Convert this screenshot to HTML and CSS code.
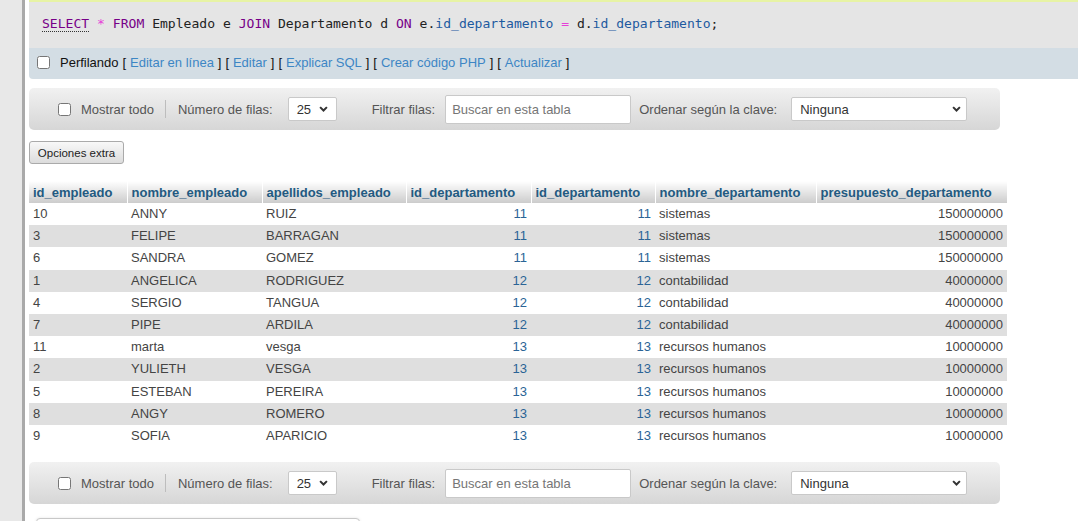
FILE: index.html
```html
<!DOCTYPE html>
<html lang="es">
<head>
<meta charset="utf-8">
<title>phpMyAdmin</title>
<link rel="stylesheet" href="styles.css">
</head>
<body>
<div class="app">
  <div class="nav-strip"></div>
  <div class="resizer"></div>
  <main class="content">
    <div class="msg-edge"></div>
    <div class="sql-box"><code><span class="kw kw-doc">SELECT</span> <span class="op">*</span> <span class="kw">FROM</span> Empleado e <span class="kw">JOIN</span> Departamento d <span class="kw">ON</span> e.<span class="var">id_departamento</span> <span class="op">=</span> d.<span class="var">id_departamento</span>;</code></div>
    <div class="tools">
      <input type="checkbox" class="cb">
      <span class="tools-text">Perfilando [ <a href="#">Editar en línea</a> ] [ <a href="#">Editar</a> ] [ <a href="#">Explicar SQL</a> ] [ <a href="#">Crear código PHP</a> ] [ <a href="#">Actualizar</a> ]</span>
    </div>

    <div class="navigation">
      <input type="checkbox" class="cb nav-cb">
      <span class="lbl lbl-show">Mostrar todo</span>
      <span class="sep"></span>
      <span class="lbl lbl-rows">Número de filas:</span>
      <span class="sel sel-rows"><span>25</span><svg class="chev" width="9" height="6" viewBox="0 0 9 6"><polyline points="1.1,1.1 4.5,4.5 7.9,1.1" fill="none" stroke="#333" stroke-width="2"/></svg></span>
      <span class="lbl lbl-filter">Filtrar filas:</span>
      <span class="search">Buscar en esta tabla</span>
      <span class="lbl lbl-sort">Ordenar según la clave:</span>
      <span class="sel sel-sort"><span>Ninguna</span><svg class="chev" width="9" height="6" viewBox="0 0 9 6"><polyline points="1.1,1.1 4.5,4.5 7.9,1.1" fill="none" stroke="#333" stroke-width="2"/></svg></span>
    </div>

    <div class="extra-row"><button class="extra">Opciones extra</button></div>

    <table class="data">
      <colgroup>
        <col class="c1"><col class="c2"><col class="c3"><col class="c4"><col class="c5"><col class="c6"><col class="c7">
      </colgroup>
      <thead>
        <tr>
          <th>id_empleado</th><th>nombre_empleado</th><th>apellidos_empleado</th><th>id_departamento</th><th>id_departamento</th><th>nombre_departamento</th><th>presupuesto_departamento</th>
        </tr>
      </thead>
      <tbody>
        <tr><td>10</td><td>ANNY</td><td>RUIZ</td><td class="num link">11</td><td class="num link">11</td><td>sistemas</td><td class="num">150000000</td></tr>
        <tr><td>3</td><td>FELIPE</td><td>BARRAGAN</td><td class="num link">11</td><td class="num link">11</td><td>sistemas</td><td class="num">150000000</td></tr>
        <tr><td>6</td><td>SANDRA</td><td>GOMEZ</td><td class="num link">11</td><td class="num link">11</td><td>sistemas</td><td class="num">150000000</td></tr>
        <tr><td>1</td><td>ANGELICA</td><td>RODRIGUEZ</td><td class="num link">12</td><td class="num link">12</td><td>contabilidad</td><td class="num">40000000</td></tr>
        <tr><td>4</td><td>SERGIO</td><td>TANGUA</td><td class="num link">12</td><td class="num link">12</td><td>contabilidad</td><td class="num">40000000</td></tr>
        <tr><td>7</td><td>PIPE</td><td>ARDILA</td><td class="num link">12</td><td class="num link">12</td><td>contabilidad</td><td class="num">40000000</td></tr>
        <tr><td>11</td><td>marta</td><td>vesga</td><td class="num link">13</td><td class="num link">13</td><td>recursos humanos</td><td class="num">10000000</td></tr>
        <tr><td>2</td><td>YULIETH</td><td>VESGA</td><td class="num link">13</td><td class="num link">13</td><td>recursos humanos</td><td class="num">10000000</td></tr>
        <tr><td>5</td><td>ESTEBAN</td><td>PEREIRA</td><td class="num link">13</td><td class="num link">13</td><td>recursos humanos</td><td class="num">10000000</td></tr>
        <tr><td>8</td><td>ANGY</td><td>ROMERO</td><td class="num link">13</td><td class="num link">13</td><td>recursos humanos</td><td class="num">10000000</td></tr>
        <tr><td>9</td><td>SOFIA</td><td>APARICIO</td><td class="num link">13</td><td class="num link">13</td><td>recursos humanos</td><td class="num">10000000</td></tr>
      </tbody>
    </table>

    <div class="navigation nav-bottom">
      <input type="checkbox" class="cb nav-cb">
      <span class="lbl lbl-show">Mostrar todo</span>
      <span class="sep"></span>
      <span class="lbl lbl-rows">Número de filas:</span>
      <span class="sel sel-rows"><span>25</span><svg class="chev" width="9" height="6" viewBox="0 0 9 6"><polyline points="1.1,1.1 4.5,4.5 7.9,1.1" fill="none" stroke="#333" stroke-width="2"/></svg></span>
      <span class="lbl lbl-filter">Filtrar filas:</span>
      <span class="search">Buscar en esta tabla</span>
      <span class="lbl lbl-sort">Ordenar según la clave:</span>
      <span class="sel sel-sort"><span>Ninguna</span><svg class="chev" width="9" height="6" viewBox="0 0 9 6"><polyline points="1.1,1.1 4.5,4.5 7.9,1.1" fill="none" stroke="#333" stroke-width="2"/></svg></span>
    </div>

    <div class="ops"></div>
  </main>
</div>
</body>
</html>
```

FILE: styles.css
```css
* { box-sizing: border-box; }

html, body {
  margin: 0;
  padding: 0;
  background: #fff;
}

body {
  font-family: "Liberation Sans", Arial, sans-serif;
  font-size: 13px;
  color: #444;
  overflow: hidden;
  height: 521px;
}

.app {
  display: flex;
  height: 521px;
  overflow: hidden;
}

.nav-strip {
  width: 22px;
  flex: none;
  background: #e8e8e8;
}

.resizer {
  width: 3px;
  flex: none;
  background: #a9a9a9;
}

.content {
  flex: 1;
  min-width: 0;
  padding-left: 4px;
}

.msg-edge {
  height: 2px;
  background: #e7f3a5;
}

.sql-box {
  height: 46px;
  background: #e5e5e5;
  display: flex;
  align-items: center;
  padding-left: 13px;
  padding-bottom: 4px;
}

.sql-box code {
  font-family: "DejaVu Sans Mono", "Liberation Mono", monospace;
  font-size: 13.07px;
  color: #222;
  white-space: pre;
}

.kw { color: #770088; }
.kw-doc { border-bottom: 1px dotted #333; }
.op { color: #e63fd8; }
.var { color: #1d5aa0; }

.tools {
  height: 31px;
  background: #d3dde4;
  display: flex;
  align-items: center;
  padding-left: 8px;
  padding-bottom: 2px;
  border-bottom-left-radius: 4px;
  color: #000;
}

.cb {
  width: 13px;
  height: 13px;
  margin: 0;
  flex: none;
}

.tools-text {
  margin-left: 10px;
  color: #111;
  word-spacing: 0.33px;
}

.tools-text a {
  color: #3d86c4;
  text-decoration: none;
  word-spacing: 0;
}

.navigation {
  margin-top: 9px;
  width: 971px;
  height: 42px;
  border-radius: 5px;
  background: linear-gradient(to bottom, #f1f1f1, #d6d6d6);
  display: flex;
  align-items: center;
  padding-left: 29px;
  color: #555;
}

.nav-bottom {
  margin-top: 15px;
}

.lbl { white-space: nowrap; }

.lbl-show { margin-left: 10px; }

.sep {
  width: 1px;
  height: 18px;
  background: #bdbdbd;
  margin-left: 11px;
}

.lbl-rows { margin-left: 12px; }

.sel {
  position: relative;
  height: 24px;
  background: #fff;
  border: 1px solid #c9c9c9;
  border-radius: 2px;
  display: flex;
  align-items: center;
  padding-left: 8px;
  color: #333;
}

.sel-rows {
  width: 49px;
  margin-left: 15px;
}

.sel-sort {
  width: 176px;
  margin-left: 14px;
}

.chev {
  position: absolute;
  right: 5px;
  top: 8px;
}

.sel-rows .chev { right: 8px; }

.lbl-filter { margin-left: 35px; }

.search {
  width: 186px;
  height: 29px;
  margin-left: 10px;
  background: #fff;
  border: 1px solid #c9c9c9;
  border-radius: 2px;
  display: flex;
  align-items: center;
  padding-left: 6px;
  color: #767676;
}

.lbl-sort { margin-left: 8px; }

.extra-row {
  margin-top: 11px;
  height: 23px;
}

.extra {
  height: 23px;
  width: 95px;
  padding: 0;
  font-family: "Liberation Sans", Arial, sans-serif;
  font-size: 11.5px;
  color: #222;
  background: linear-gradient(to bottom, #f8f8f8, #dcdcdc);
  border: 1px solid #aaa;
  border-radius: 3px;
}

.data {
  margin-top: 17px;
  border-collapse: collapse;
  table-layout: fixed;
  width: 978px;
}

.c1 { width: 98px; }
.c2 { width: 135px; }
.c3 { width: 144px; }
.c4 { width: 125px; }
.c5 { width: 124px; }
.c6 { width: 161px; }
.c7 { width: 191px; }

.data th {
  height: 22px;
  padding: 0 4px;
  text-align: left;
  font-weight: bold;
  color: #235a81;
  background: linear-gradient(to bottom, #ffffff, #cccccc);
  border-left: 1px solid #fff;
  white-space: nowrap;
  overflow: hidden;
}

.data th:first-child { border-left: 0; }

.data td {
  height: 22.2px;
  padding: 0 4px 1px;
  white-space: nowrap;
  overflow: hidden;
  color: #444;
}

.data tbody tr:nth-child(even) td { background: #dfdfdf; }

.data td.num {
  text-align: right;
  padding-right: 4px;
}

.data td.link { color: #2a6496; }

.ops {
  margin-top: 14px;
  margin-left: 7px;
  width: 324px;
  height: 40px;
  border: 1px solid #c8c8c8;
  border-radius: 4px 4px 0 0;
  box-shadow: 0 0 3px rgba(0,0,0,0.1);
  background: #fff;
}
```
